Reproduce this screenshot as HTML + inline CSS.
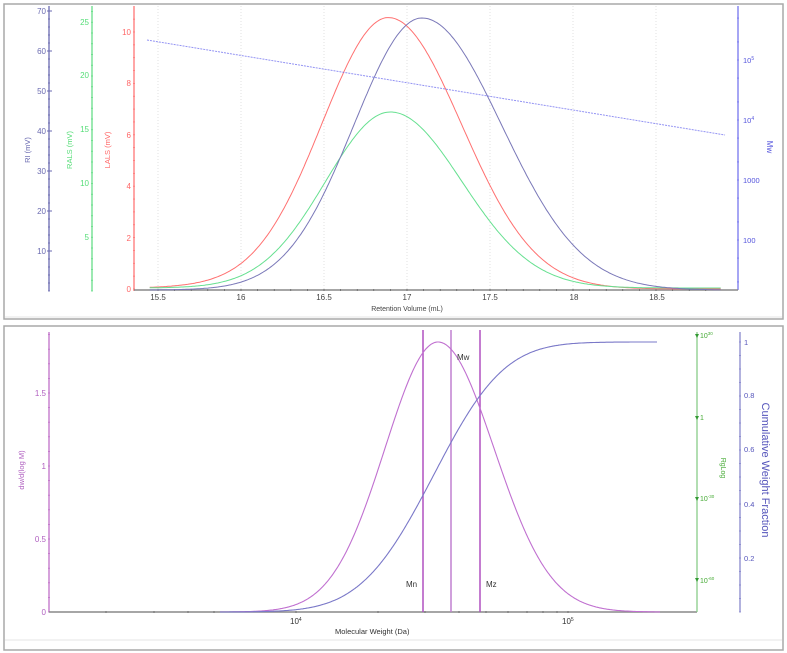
<!DOCTYPE html>
<html><head><meta charset="utf-8"><style>
html,body{margin:0;padding:0;background:#fff;}
svg{display:block;font-family:"Liberation Sans",sans-serif;}
</style></head><body>
<svg id="s" width="787" height="653" viewBox="0 0 787 653" xmlns="http://www.w3.org/2000/svg">
<rect x="0" y="0" width="787" height="653" fill="#fff"/>
<rect x="4" y="4" width="779" height="315" fill="#fff" stroke="#a8a8a8" stroke-width="1.5"/>
<line x1="5" y1="317" x2="782" y2="317" stroke="#e4e4e4"/>
<rect x="4" y="326" width="779" height="324" fill="#fff" stroke="#a8a8a8" stroke-width="1.5"/>
<line x1="5" y1="640" x2="782" y2="640" stroke="#e4e4e4"/>
<g id="top"></g>
<g id="bot"></g>
<g font-size="8">
<g fill="#6a6ab0" text-anchor="end">
<text x="46" y="14">70</text><text x="46" y="54">60</text><text x="46" y="94">50</text><text x="46" y="134">40</text><text x="46" y="174">30</text><text x="46" y="214">20</text><text x="46" y="254">10</text>
</g>
<g fill="#55dd77" text-anchor="end">
<text x="89" y="25">25</text><text x="89" y="78">20</text><text x="89" y="132">15</text><text x="89" y="186">10</text><text x="89" y="240">5</text>
</g>
<g fill="#ff6666" text-anchor="end">
<text x="131" y="35">10</text><text x="131" y="86">8</text><text x="131" y="138">6</text><text x="131" y="189">4</text><text x="131" y="241">2</text><text x="131" y="292">0</text>
</g>
<text transform="translate(30,150) rotate(-90)" fill="#6a6ab0" text-anchor="middle" font-size="7.5">RI (mV)</text>
<text transform="translate(72,150) rotate(-90)" fill="#55dd77" text-anchor="middle" font-size="7.5">RALS (mV)</text>
<text transform="translate(110,150) rotate(-90)" fill="#ff6666" text-anchor="middle" font-size="7.5">LALS (mV)</text>
<g fill="#444" text-anchor="middle" font-size="8">
<text x="158" y="300">15.5</text><text x="241" y="300">16</text><text x="324" y="300">16.5</text><text x="407" y="300">17</text><text x="490" y="300">17.5</text><text x="574" y="300">18</text><text x="657" y="300">18.5</text>
<text x="407" y="311" font-size="7">Retention Volume (mL)</text>
</g>
<g fill="#5555dd" font-size="7.5">
<text x="743" y="63">10<tspan font-size="5" dy="-3">5</tspan></text>
<text x="743" y="123">10<tspan font-size="5" dy="-3">4</tspan></text>
<text x="743" y="183">1000</text><text x="743" y="243">100</text>
</g>
<text transform="translate(767,147) rotate(90)" fill="#5555dd" text-anchor="middle" font-size="8">Mw</text>
<g fill="#b060c0" text-anchor="end" font-size="8">
<text x="46" y="396">1.5</text><text x="46" y="469">1</text><text x="46" y="542">0.5</text><text x="46" y="615">0</text>
</g>
<text transform="translate(24,470) rotate(-90)" fill="#b060c0" text-anchor="middle" font-size="7.5">dw/d(log M)</text>
<g fill="#333" font-size="8">
<text x="290" y="624">10<tspan font-size="5" dy="-3">4</tspan></text>
<text x="562" y="624">10<tspan font-size="5" dy="-3">5</tspan></text>
<text x="335" y="634" font-size="7.5">Molecular Weight (Da)</text>
<text x="406" y="587">Mn</text><text x="457" y="360">Mw</text><text x="486" y="587">Mz</text>
</g>
<g fill="#44aa33" font-size="7">
<text x="700" y="338">10<tspan font-size="4.5" dy="-3">30</tspan></text>
<text x="700" y="420">1</text>
<text x="700" y="501">10<tspan font-size="4.5" dy="-3">-30</tspan></text>
<text x="700" y="583">10<tspan font-size="4.5" dy="-3">-60</tspan></text>
</g>
<text transform="translate(721,468) rotate(90)" fill="#44aa33" text-anchor="middle" font-size="7">RgLog</text>
<g fill="#5555bb" font-size="7.5">
<text x="744" y="345">1</text><text x="744" y="398">0.8</text><text x="744" y="452">0.6</text><text x="744" y="507">0.4</text><text x="744" y="561">0.2</text>
</g>
<text transform="translate(762,470) rotate(90)" fill="#5555bb" text-anchor="middle" font-size="11">Cumulative Weight Fraction</text>
</g>
</svg>
<script>
var NS="http://www.w3.org/2000/svg";
function el(p,t,a){var e=document.createElementNS(NS,t);for(var k in a)e.setAttribute(k,a[k]);p.appendChild(e);return e;}
var T=document.getElementById('top'),B=document.getElementById('bot');
function X(v){return 158+(v-15.5)*166;}
for(var v=15.5;v<=18.51;v+=0.5){el(T,'line',{x1:X(v),y1:6,x2:X(v),y2:290,stroke:'#e2e2e2','stroke-dasharray':'1,2'});}
function axis(g,x,y1,y2,c,ticks,tl){el(g,'line',{x1:x,y1:y1,x2:x,y2:y2,stroke:c,'stroke-width':1.3});ticks.forEach(function(t){if(t<y1||t>y2)return;el(g,'line',{x1:x-(tl||3),y1:t,x2:x+(tl||3),y2:t,stroke:c,'stroke-width':0.8});});}
var t1=[];for(var y=11;y<=291;y+=8)t1.push(y);axis(T,49,6,291,'#6a6ab0',t1,1);
[11,51,91,131,171,211,251].forEach(function(y){el(T,'line',{x1:47,y1:y,x2:52,y2:y,stroke:'#6a6ab0'});});
var t2=[];for(var y=291;y>=8;y-=10.75)t2.push(y);axis(T,92,6,291,'#66dd88',t2,1);
var t3=[];for(var y=289;y>=8;y-=12.85)t3.push(y);axis(T,134,6,291,'#ff7777',t3,1);
var t4=[];[0,60,120,180,240].forEach(function(b){[1,2,5].forEach(function(k){t4.push(b+60-60*Math.log10(k));});});axis(T,738,6,290,'#7777ee',t4,1);
el(T,'line',{x1:134,y1:290,x2:738,y2:290,stroke:'#888','stroke-width':1.5});
for(var v=15.5;v<=18.9;v+=0.1){el(T,'line',{x1:X(v),y1:289,x2:X(v),y2:291,stroke:'#555','stroke-width':0.6});}
function pk(v,c,h,sl,sr){var s=v<c?sl:sr;return h*Math.exp(-(v-c)*(v-c)/(2*s*s));}
function curve(g,f,col,w){var d='';for(var v=15.45;v<=18.9;v+=0.01){d+=(d?'L':'M')+X(v).toFixed(1)+','+f(v).toFixed(1);}el(g,'path',{d:d,fill:'none',stroke:col,'stroke-width':w||1});}
curve(T,function(v){return 289-pk(v,16.89,270,0.40,0.44)-3*Math.exp(-Math.pow((v-16.2)/0.8,2));},'#ff7070');
curve(T,function(v){return 290-pk(v,16.9,176,0.39,0.43)-2;},'#66e090');
curve(T,function(v){return 290-pk(v,17.09,272,0.41,0.48);},'#7a78b8');
el(T,'line',{x1:147,y1:40,x2:725,y2:135,stroke:'#6666ee','stroke-width':1,'stroke-dasharray':'2,1',opacity:0.7});
var b1=[];for(var y=612;y>=333;y-=14.6)b1.push(y);axis(B,49,332,612,'#c070c8',b1,1);
el(B,'line',{x1:49,y1:612,x2:697,y2:612,stroke:'#888','stroke-width':1.5});
[106,154,188,214,296,378,425,459,486,508,527,543,557,568].forEach(function(x){el(B,'line',{x1:x,y1:611,x2:x,y2:613,stroke:'#555','stroke-width':0.6});});
el(B,'line',{x1:697,y1:332,x2:697,y2:612,stroke:'#88cc88','stroke-width':1.3});
[336,418,499,580].forEach(function(y){el(B,'path',{d:'M695,'+(y-2)+'L699,'+(y-2)+'L697,'+(y+2)+'Z',fill:'#339933'});});
var b3=[];for(var y=342;y<=612;y+=13.5)b3.push(y);axis(B,740,332,612,'#8888cc',b3,1);
[[423,'#b050c0'],[451,'#c080d0'],[480,'#b050c0']].forEach(function(a){el(B,'line',{x1:a[0],y1:330,x2:a[0],y2:612,stroke:a[1],'stroke-width':1.5});});
var d='';for(var x=220;x<=660;x+=1){var s=x<438?53:56;var y=612-270*Math.exp(-(x-438)*(x-438)/(2*s*s));d+=(d?'L':'M')+x+','+y.toFixed(1);}
el(B,'path',{d:d,fill:'none',stroke:'#c070d0','stroke-width':1.1});
var acc=0,tot=0,arr=[];for(var x=200;x<=700;x++){var s=x<435?58:55;var w=Math.exp(-(x-435)*(x-435)/(2*s*s));acc+=w;arr.push([x,acc]);}tot=acc;
d='';arr.forEach(function(p){if(p[0]<220||p[0]>657)return;var y=612-270*p[1]/tot;d+=(d?'L':'M')+p[0]+','+y.toFixed(1);});
el(B,'path',{d:d,fill:'none',stroke:'#7a78c8','stroke-width':1.1});
</script>
</body></html>
